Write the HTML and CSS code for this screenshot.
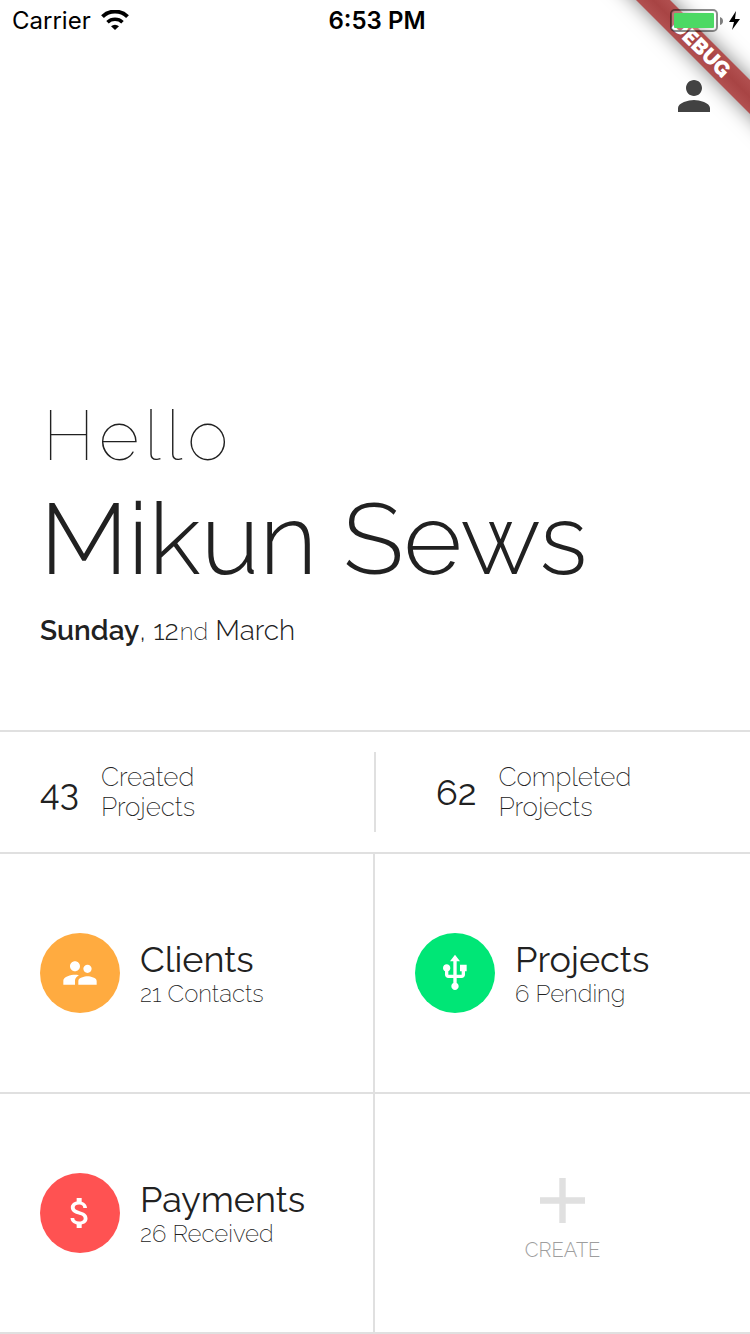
FILE: index.html
```html
<!DOCTYPE html>
<html lang="en">
<head>
<meta charset="utf-8">
<meta name="viewport" content="width=device-width, initial-scale=1">
<title>Dashboard</title>
<link rel="stylesheet" href="styles.css">
</head>
<body>
<div class="app">
  <div class="banner"><span class="banner-band">DEBUG</span></div>
  <div class="status">
    <div class="status-side">
      <span>Carrier</span>
      <svg class="wifi" viewBox="0 0 28 20" aria-hidden="true">
        <path d="M1.500 6.600A18 18 0 0 1 26.500 6.600" fill="none" stroke="#000" stroke-width="4"/>
        <path d="M6.500 12.200A11 11 0 0 1 21.500 12.200" fill="none" stroke="#000" stroke-width="3.600"/>
        <path d="M10 16.200A6 6 0 0 1 18 16.200L14 20Z"/>
      </svg>
    </div>
    <time class="clock">6:53 PM</time>
    <div class="status-side status-right">
      <svg class="battery" viewBox="0 -2 72 26" aria-hidden="true">
        <rect x="1" y="1" width="46" height="21" rx="4" fill="#fff" fill-opacity=".25" stroke="#000" stroke-opacity=".45" stroke-width="2"/>
        <rect x="4" y="4" width="40" height="15" rx="1" fill="#4cd964"/>
        <path d="M50 8q3 1 3 4t-3 4z" fill="#000" fill-opacity=".5"/>
        <path d="M66 2l-7 11h5l-2 8 8-11h-5z"/>
      </svg>
    </div>
  </div>

  <header class="toolbar">
    <button class="profile" type="button" aria-label="Profile">
      <svg viewBox="0 0 24 24" aria-hidden="true"><path d="M12 12c2.210 0 4-1.790 4-4s-1.790-4-4-4-4 1.790-4 4 1.790 4 4 4zm0 2c-2.670 0-8 1.340-8 4v2h16v-2c0-2.660-5.330-4-8-4z"/></svg>
    </button>
  </header>

  <main class="main">
    <section class="hero">
      <p class="hello">Hello</p>
      <h1 class="name">Mikun Sews</h1>
      <p class="date"><strong>Sunday</strong>, 12<span class="ordinal">nd</span> March</p>
    </section>

    <section class="stats">
      <div class="stat">
        <span class="stat-number">43</span>
        <span class="stat-label">Created<br>Projects</span>
      </div>
      <div class="stat-divider"></div>
      <div class="stat stat-completed">
        <span class="stat-number">62</span>
        <span class="stat-label">Completed<br>Projects</span>
      </div>
    </section>

    <nav class="tiles">
      <button class="tile" type="button">
        <span class="badge badge-clients"><svg viewBox="0 0 24 24" aria-hidden="true"><path d="M16.500 12c1.380 0 2.490-1.120 2.490-2.500S17.880 7 16.500 7C15.120 7 14 8.120 14 9.500s1.120 2.500 2.500 2.500zM9 11c1.660 0 2.990-1.340 2.990-3S10.660 5 9 5C7.340 5 6 6.340 6 8s1.340 3 3 3zm7.500 3c-1.830 0-5.500.92-5.500 2.750V19h11v-2.250c0-1.830-3.670-2.750-5.500-2.750zM9 13c-2.330 0-7 1.170-7 3.500V19h7v-2.250c0-.85.33-2.340 2.370-3.470C10.500 13.100 9.660 13 9 13z"/></svg></span>
        <span class="tile-text"><span class="tile-title">Clients</span><span class="tile-sub">21 Contacts</span></span>
      </button>
      <button class="tile" type="button">
        <span class="badge badge-projects"><svg viewBox="0 0 24 24" aria-hidden="true"><path d="M15 7v4h1v2h-3V5h2l-3-4-3 4h2v8H8v-2.070c.7-.37 1.200-1.080 1.200-1.930 0-1.210-.99-2.200-2.200-2.200-1.210 0-2.200.99-2.200 2.200 0 .85.5 1.560 1.200 1.930V13c0 1.110.89 2 2 2h3v3.050c-.71.37-1.200 1.100-1.200 1.950 0 1.220.99 2.200 2.200 2.200 1.210 0 2.200-.98 2.200-2.200 0-.85-.49-1.580-1.200-1.950V15h3c1.110 0 2-.89 2-2v-2h1V7h-4z"/></svg></span>
        <span class="tile-text"><span class="tile-title">Projects</span><span class="tile-sub">6 Pending</span></span>
      </button>
      <button class="tile" type="button">
        <span class="badge badge-payments"><svg viewBox="0 0 24 24" aria-hidden="true"><path d="M11.800 10.900c-2.270-.59-3-1.200-3-2.150 0-1.090 1.010-1.850 2.700-1.850 1.780 0 2.440.85 2.500 2.100h2.210c-.07-1.720-1.120-3.300-3.210-3.810V3h-3v2.160c-1.940.42-3.500 1.680-3.500 3.610 0 2.310 1.910 3.460 4.700 4.130 2.500.6 3 1.480 3 2.410 0 .69-.49 1.790-2.700 1.790-2.060 0-2.870-.92-2.980-2.100h-2.200c.12 2.190 1.760 3.420 3.680 3.830V21h3v-2.150c1.950-.37 3.500-1.500 3.500-3.550 0-2.840-2.430-3.810-4.700-4.400z"/></svg></span>
        <span class="tile-text"><span class="tile-title">Payments</span><span class="tile-sub">26 Received</span></span>
      </button>
      <button class="tile tile-create" type="button">
        <svg class="plus" viewBox="0 0 14 14" aria-hidden="true"><path d="M14 8H8v6H6V8H0V6h6V0h2v6h6z"/></svg>
        <span class="create-label">CREATE</span>
      </button>
    </nav>
  </main>
</div>
</body>
</html>
```
FILE: styles.css
```css
* { box-sizing: border-box; }

body {
  margin: 0;
  background: #fff;
  color: #212121;
  font-family: Raleway, Inter, "Liberation Sans", sans-serif;
}

h1, p { margin: 0; }

button {
  border: 0;
  padding: 0;
  background: none;
  color: inherit;
  font: inherit;
  text-align: left;
  cursor: pointer;
}

svg { display: block; }

.app {
  position: relative;
  min-height: 100vh;
  display: flex;
  flex-direction: column;
}

/* Status bar */
.status {
  position: relative;
  display: flex;
  align-items: center;
  height: 40px;
  padding: 0 8px 0 12px;
  color: #000;
  font-family: Inter, "Liberation Sans", sans-serif;
  font-size: 24px;
}

.status-side {
  flex: 1;
  display: flex;
  align-items: center;
  gap: 10px;
}

.status-right { justify-content: flex-end; }
.clock { font-weight: 600; }
.wifi { width: 28px; height: 20px; }
.battery { width: 72px; height: 26px; }

/* Corner ribbon */
.banner {
  position: absolute;
  top: 0;
  right: 0;
  width: 160px;
  height: 160px;
  overflow: hidden;
  pointer-events: none;
}

.banner-band {
  position: absolute;
  top: 36px;
  left: -9px;
  width: 240px;
  height: 24px;
  background: linear-gradient(#b25050, #a84444 50%, #b25050);
  box-shadow: 0 0 20px rgba(0, 0, 0, .5);
  color: #fff;
  font-size: 21px;
  font-weight: 900;
  line-height: 24px;
  text-align: center;
  transform: rotate(45deg);
}

/* Toolbar */
.toolbar {
  display: flex;
  justify-content: flex-end;
  padding: 32px 32px 0;
}

.profile { position: relative; }
.profile svg { width: 48px; height: 48px; fill: #424242; }

.main {
  flex: 1;
  display: flex;
  flex-direction: column;
}

/* Greeting */
.hero {
  flex: 1;
  display: flex;
  flex-direction: column;
  justify-content: flex-end;
  padding: 0 40px 81px;
}

.hello {
  padding-left: 3px;
  font-size: 70px;
  font-weight: 100;
  line-height: 88px;
  letter-spacing: 5px;
}

.name {
  font-size: 100px;
  font-weight: 300;
  line-height: 120px;
}

.date {
  margin-top: 15px;
  font-size: 28px;
  font-weight: 300;
  line-height: 34px;
}

.date strong { font-weight: 600; }

.ordinal {
  padding-left: 1px;
  font-size: 24px;
  font-weight: 200;
}

/* Counters */
.stats {
  display: grid;
  grid-template-columns: 1fr 2px 1fr;
  padding: 20px 0;
  border-top: 2px solid #e0e0e0;
  border-bottom: 2px solid #e0e0e0;
}

.stat {
  display: flex;
  align-items: center;
  gap: 22px;
  height: 80px;
  padding-left: 40px;
}

.stat-divider { background: #e0e0e0; }
.stat-completed { padding-left: 60px; }

.stat-number { font-size: 36px; font-weight: 400; }

.stat-label {
  font-size: 26px;
  font-weight: 200;
  line-height: 30px;
}

/* Tiles */
.tiles {
  display: grid;
  grid-template-columns: 1fr 1fr;
}

.tile {
  display: flex;
  align-items: center;
  gap: 20px;
  height: 240px;
  padding-left: 40px;
  border-bottom: 2px solid #e0e0e0;
}

.tile:nth-child(odd) { border-right: 2px solid #e0e0e0; }

.badge {
  display: grid;
  place-items: center;
  width: 80px;
  height: 80px;
  border-radius: 50%;
}

.badge svg { width: 40px; height: 40px; fill: #fff; }
.badge-clients { background: #ffab40; }
.badge-projects { background: #00e676; }
.badge-payments { background: #ff5252; }

.tile-text { display: flex; flex-direction: column; }

.tile-title {
  font-size: 36px;
  font-weight: 400;
  line-height: 42px;
}

.tile-sub {
  font-size: 24px;
  font-weight: 200;
  line-height: 28px;
}

.tile-create {
  flex-direction: column;
  justify-content: center;
  gap: 15px;
  padding: 14px 0 0;
}

.plus { width: 45px; height: 45px; fill: #e0e0e0; }

.create-label {
  color: #9e9e9e;
  font-size: 20px;
  font-weight: 300;
  line-height: 24px;
}
```
